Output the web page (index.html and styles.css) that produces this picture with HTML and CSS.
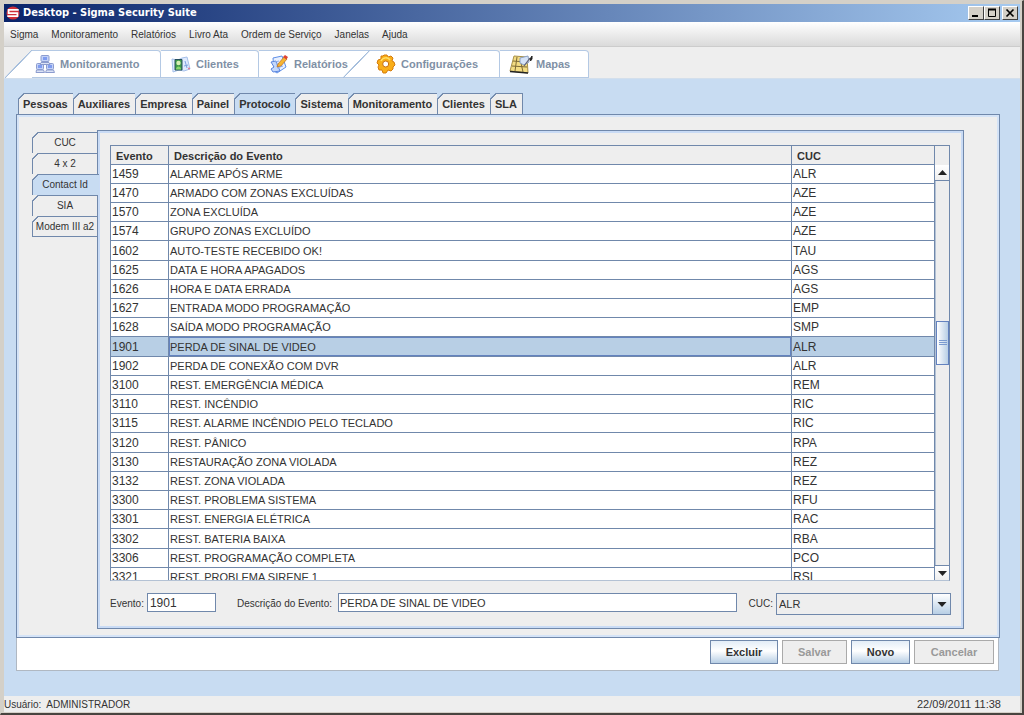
FILE: index.html
```html
<!DOCTYPE html>
<html lang="pt-BR">
<head>
<meta charset="utf-8">
<title>Desktop - Sigma Security Suite</title>
<link rel="stylesheet" href="styles.css">
</head>
<body>
<div class="window">
  <header class="titlebar">
    <svg class="logo" viewBox="0 0 16 16" aria-hidden="true"><circle cx="8" cy="8" r="7.500" fill="#d0303a"/><path d="M14.500 4.500H3v3.500h10v3.500H1.500" fill="none" stroke="#fff" stroke-width="2"/></svg>
    <h1 class="title">Desktop - Sigma Security Suite</h1>
    <div class="window-buttons">
      <button class="winbtn" aria-label="Minimizar"><svg viewBox="0 0 12 10"><path d="M2 8h6" stroke="#000" stroke-width="2"/></svg></button>
      <button class="winbtn" aria-label="Maximizar"><svg viewBox="0 0 12 10"><path d="M2.500 1v7.500h7V1" fill="none" stroke="#000"/><path d="M2 1.500h8" stroke="#000" stroke-width="2"/></svg></button>
      <button class="winbtn close" aria-label="Fechar"><svg viewBox="0 0 12 10"><path d="M2.500 1.500l7 7M9.500 1.500l-7 7" stroke="#000" stroke-width="1.700"/></svg></button>
    </div>
  </header>

  <nav class="menubar">
    <button>Sigma</button><button>Monitoramento</button><button>Relatórios</button><button>Livro Ata</button><button>Ordem de Serviço</button><button>Janelas</button><button>Ajuda</button>
  </nav>

  <nav class="modules">
    <button class="module slope first">
      <svg class="icon" viewBox="0 0 20 20" aria-hidden="true"><g stroke="#8c9cce" fill="#c3d2f7"><rect x="6" y="1.500" width="8" height="6" rx="1"/><rect x="1.500" y="9.500" width="7" height="6" rx="1"/><rect x="11.500" y="9.500" width="7" height="6" rx="1"/><path d="M6 8.500h8l1 2H5zM1.500 16h7l1 2.500H1zM11.500 16h7l1 2.500h-9z" fill="#dbe2f5"/></g><path d="M8 3h4v3H8zM3 11h4v3H3zM13 11h4v3h-4z" fill="#7f9cf0"/></svg>
      <span>Monitoramento</span></button>
    <button class="module clients">
      <svg class="icon" viewBox="0 0 20 20" aria-hidden="true"><path d="M1 5l6 1 4-2 5-1 3 12-6 2-5-1-6 2z" fill="#dfeafd" stroke="#a5c0ea"/><path d="M4 5.500h7V16H4z" fill="#3f9a48" stroke="#274f5c"/><circle cx="7.500" cy="9" r="2.200" fill="#d6efb2"/><path d="M5 15.500c0-4 5-4 5 0z" fill="#8ad86c"/><path d="M14 7l2 7M13 12l4-1" stroke="#7fa1df"/><circle cx="18" cy="14.500" r="1" fill="#e07890"/></svg>
      <span>Clientes</span></button>
    <button class="module reports">
      <svg class="icon" viewBox="0 0 20 20" aria-hidden="true"><path d="M4 4l9-2 4 11-9 6-3-2z" fill="#e8f0ff" stroke="#5f8fe6"/><path d="M2 8l5-1 4 10-7 1-2-3 3-2z" fill="#c4d8fb" stroke="#5b86df"/><path d="M6 8l4-1M7 11l6-2M8 14l6-2" stroke="#8cacec"/><path d="M9 10l6-7 3 2-6 7-4 1z" fill="#f7b531" stroke="#b76b22" stroke-width=".7"/><path d="M14 3l2-2 3 2-1.500 2.500z" fill="#dd4433"/></svg>
      <span>Relatórios</span></button>
    <button class="module slope config">
      <svg class="icon" viewBox="0 0 20 20" aria-hidden="true"><path d="M8 1l3 0 1 2 3-1 2 2-1 3 2 1 1 3-2 2v2l-2 2-3-1-2 3H7l-1-3-3 0-1-3 1-2-2-2 1-3 3-1 0-3 2 0z" fill="#f9ae18" stroke="#d57c0c"/><path d="M5 7c2-4 7-4 9-1" fill="none" stroke="#ffe168" stroke-width="1.500"/><circle cx="9.700" cy="10" r="3" fill="#fff" stroke="#c86e0c"/></svg>
      <span>Configurações</span></button>
    <button class="module maps">
      <svg class="icon map" viewBox="0 0 24 20" aria-hidden="true"><path d="M5 2l13 1 1 16L1 17z" fill="#f3dc82" stroke="#a89048"/><path d="M4 7l13 1M3 12l15 1M8 3L6 17M12 9l2 9" fill="none" stroke="#7d6a35"/><path d="M11 4l8-2 1 6-5 3-4-2z" fill="#d5e3f8" stroke="#8ba0c2"/><path d="M1 17.500l18 1.500" stroke="#222" stroke-width="1.300"/><path d="M15 12l6-8" stroke="#667" stroke-width="1.200"/><path d="M21 5l2-3v3l-1.500 2z" fill="#222" stroke="#222"/></svg>
      <span>Mapas</span></button>
  </nav>

  <main class="desk">
    <nav class="tabs">
      <button class="tab">Pessoas</button><button class="tab">Auxiliares</button><button class="tab">Empresa</button><button class="tab">Painel</button><button class="tab active">Protocolo</button><button class="tab">Sistema</button><button class="tab">Monitoramento</button><button class="tab">Clientes</button><button class="tab">SLA</button>
    </nav>
    <section class="pane">
      <nav class="side-tabs">
        <button class="side-tab">CUC</button><button class="side-tab">4 x 2</button><button class="side-tab active">Contact Id</button><button class="side-tab">SIA</button><button class="side-tab">Modem III a2</button>
      </nav>
      <section class="content">
        <div class="grid">
          <div class="grid-clip">
          <table class="events">
            <thead><tr><th class="col-event">Evento</th><th>Descrição do Evento</th><th class="col-cuc">CUC</th></tr></thead>
            <tbody>
              <tr><td>1459</td><td>ALARME APÓS ARME</td><td>ALR</td></tr>
              <tr><td>1470</td><td>ARMADO COM ZONAS EXCLUÍDAS</td><td>AZE</td></tr>
              <tr><td>1570</td><td>ZONA EXCLUÍDA</td><td>AZE</td></tr>
              <tr><td>1574</td><td>GRUPO ZONAS EXCLUÍDO</td><td>AZE</td></tr>
              <tr><td>1602</td><td>AUTO-TESTE RECEBIDO OK!</td><td>TAU</td></tr>
              <tr><td>1625</td><td>DATA E HORA APAGADOS</td><td>AGS</td></tr>
              <tr><td>1626</td><td>HORA E DATA ERRADA</td><td>AGS</td></tr>
              <tr><td>1627</td><td>ENTRADA MODO PROGRAMAÇÃO</td><td>EMP</td></tr>
              <tr><td>1628</td><td>SAÍDA MODO PROGRAMAÇÃO</td><td>SMP</td></tr>
              <tr class="selected"><td>1901</td><td class="focus">PERDA DE SINAL DE VIDEO</td><td>ALR</td></tr>
              <tr><td>1902</td><td>PERDA DE CONEXÃO COM DVR</td><td>ALR</td></tr>
              <tr><td>3100</td><td>REST. EMERGÊNCIA MÉDICA</td><td>REM</td></tr>
              <tr><td>3110</td><td>REST. INCÊNDIO</td><td>RIC</td></tr>
              <tr><td>3115</td><td>REST. ALARME INCÊNDIO PELO TECLADO</td><td>RIC</td></tr>
              <tr><td>3120</td><td>REST. PÂNICO</td><td>RPA</td></tr>
              <tr><td>3130</td><td>RESTAURAÇÃO ZONA VIOLADA</td><td>REZ</td></tr>
              <tr><td>3132</td><td>REST. ZONA VIOLADA</td><td>REZ</td></tr>
              <tr><td>3300</td><td>REST. PROBLEMA SISTEMA</td><td>RFU</td></tr>
              <tr><td>3301</td><td>REST. ENERGIA ELÉTRICA</td><td>RAC</td></tr>
              <tr><td>3302</td><td>REST. BATERIA BAIXA</td><td>RBA</td></tr>
              <tr><td>3306</td><td>REST. PROGRAMAÇÃO COMPLETA</td><td>PCO</td></tr>
              <tr><td>3321</td><td>REST. PROBLEMA SIRENE 1</td><td>RSI</td></tr>
            </tbody>
          </table>
          </div>
          <div class="scroll-col">
            <div class="scroll-head"></div>
            <button class="scroll-btn" aria-label="Rolar para cima"><svg viewBox="0 0 9 5"><path d="M0 5h9L4.500 0z" fill="#222"/></svg></button>
            <div class="track"><div class="space-above"></div><div class="thumb"></div><div class="space-below"></div></div>
            <button class="scroll-btn down" aria-label="Rolar para baixo"><svg viewBox="0 0 9 5"><path d="M0 0h9L4.500 5z" fill="#222"/></svg></button>
          </div>
        </div>
        <form class="form">
          <label for="evento">Evento:</label><input id="evento" class="short" value="1901">
          <label for="descricao" class="spaced">Descrição do Evento:</label><input id="descricao" class="long" value="PERDA DE SINAL DE VIDEO">
          <label for="cuc" class="spaced-sm">CUC:</label>
          <div class="combo"><select id="cuc"><option>ALR</option></select><span class="combo-arrow"><svg viewBox="0 0 9 5"><path d="M0 0h9L4.500 5z" fill="#222"/></svg></span></div>
        </form>
      </section>
    </section>
    <footer class="actions">
      <button class="action delete">Excluir</button><button class="action save" disabled>Salvar</button><button class="action new">Novo</button><button class="action cancel" disabled>Cancelar</button>
    </footer>
  </main>
  <footer class="status"><span class="user">Usuário:&nbsp; ADMINISTRADOR</span><time>22/09/2011 11:38</time></footer>
</div>
</body>
</html>
```
FILE: styles.css
```css
* { box-sizing: border-box; }
:root {
  --line: #7088ab;
  --blue: #c8dcf2;
  --gray: #eeeeee;
  --text: #333333;
}
body {
  margin: 0;
  font: 11px/14px "Liberation Sans", Arial, sans-serif;
  color: var(--text);
  white-space: nowrap;
}
button, input, select { font: inherit; color: inherit; margin: 0; border-radius: 0; }
button { padding: 0; border: 0; background: none; }
svg { display: block; }

.window {
  display: flex;
  flex-direction: column;
  height: 100vh;
  padding: 3px 2px 1px 3px;
  border: 1px solid #d4d0c8;
  border-right: 2px solid #484440;
  border-bottom: 2px solid #484440;
  background: #d4d0c8;
}

.titlebar {
  display: flex;
  align-items: center;
  height: 18px;
  padding: 0 2px;
  background: linear-gradient(90deg, #0a246a, #a6caf0);
}
.logo { width: 14px; height: 14px; }
.title {
  flex: 1;
  margin: 0 0 0 3px;
  font: bold 11px/14px "DejaVu Sans Condensed", "DejaVu Sans", sans-serif;
  color: #fff;
}
.window-buttons { display: flex; }
.winbtn {
  width: 16px;
  height: 14px;
  padding: 1px;
  background: #d4d0c8;
  border: 1px solid;
  border-color: #fff #404040 #404040 #fff;
}
.winbtn.close { margin-left: 2px; }
.winbtn svg { width: 12px; height: 10px; }

.menubar {
  display: flex;
  gap: 13px;
  height: 25px;
  padding: 1px 6px 0;
  background: linear-gradient(#fff, #dadada);
  border-bottom: 1px solid #ccc;
  font-size: 10px;
}

.modules {
  display: flex;
  height: 32px;
  padding-top: 3px;
  padding-left: 1px;
  background: var(--gray);
  border-bottom: 1px solid #d3dfec;
}
.module {
  display: flex;
  align-items: center;
  position: relative;
  height: 28px;
  border: 1px solid #b4c9e4;
  border-left: 0;
  border-radius: 0 4px 0 0;
  background: #fff;
  color: #7f90a5;
  font-weight: bold;
}
.module .icon { flex: none; width: 20px; height: 20px; margin-right: 5px; }
.module .map { width: 24px; }
.first { width: 156px; padding-left: 30px; }
.first::before, .config::before {
  content: "";
  position: absolute;
  left: 0;
  top: -1px;
  width: 27px;
  height: 28px;
  background: linear-gradient(to bottom right, var(--gray) 48%, #a5bedc 49% 51%, #fff 52%);
}
.clients { width: 98px; padding-left: 10px; }
.reports { width: 84px; padding-left: 10px; border-right: 0; border-radius: 0; z-index: 1; }
.config { width: 157px; padding-left: 33px; }
.config::before { z-index: 2; background: linear-gradient(to bottom right, transparent 48%, #a5bedc 49% 51%, transparent 52%); }
.maps { width: 89px; padding-left: 9px; }
.maps .icon { margin-right: 3px; }

.desk {
  flex: 1;
  min-height: 0;
  display: flex;
  flex-direction: column;
  padding: 14px 20px 25px 12px;
  background: var(--blue);
}
.tabs { display: flex; padding-left: 2px; }
.tab {
  position: relative;
  height: 21px;
  padding: 0 5px 0 4px;
  border: 1px solid var(--line);
  border-bottom: 0;
  border-left-width: 0;
  background: var(--gray);
  font-weight: bold;
}
.tab:first-child { border-left-width: 1px; }
.tab.active { background: var(--blue); }
.tab::before, .side-tab::before {
  content: "";
  position: absolute;
  left: -1px;
  top: -1px;
  width: 7px;
  height: 7px;
  background: linear-gradient(135deg, var(--blue) 42%, var(--line) 43% 53%, transparent 54%);
}
.pane {
  flex: 1;
  min-height: 0;
  display: flex;
  padding: 13px 35px 8px 15px;
  border: 1px solid var(--line);
  box-shadow: inset 0 0 0 2px #d4e3f7;
  background: var(--gray);
}
.side-tabs { width: 65px; padding-top: 4px; }
.side-tab {
  display: block;
  position: relative;
  width: 100%;
  height: 21px;
  border: 1px solid var(--line);
  border-width: 1px 0 0 1px;
  font-size: 10px;
}
.side-tab::before { background: linear-gradient(135deg, var(--gray) 42%, var(--line) 43% 53%, transparent 54%); }
.side-tab.active { background: var(--blue); z-index: 1; width: calc(100% + 2px); padding-right: 2px; }
.side-tab:last-child { border-bottom-width: 1px; }
.content {
  flex: 1;
  min-width: 0;
  display: flex;
  flex-direction: column;
  margin-top: 2px;
  padding: 14px 12px 13px;
  border: 1px solid var(--line);
  box-shadow: inset 0 0 0 2px #c9dbf5;
}
.grid {
  flex: 1;
  min-height: 0;
  display: flex;
  margin-right: 1px;
  border: 1px solid var(--line);
  border-bottom-color: #b4c2d4;
}
.grid-clip { flex: 1; min-width: 0; overflow: hidden; }
.events {
  width: 100%;
  table-layout: fixed;
  border-collapse: separate;
  border-spacing: 0;
  font-size: 12px;
}
.events th, .events td {
  height: 19px;
  padding: 0 1px;
  border: 0 solid var(--line);
  border-width: 0 1px 1px 0;
  text-align: left;
  background: #fff;
}
.events td:nth-child(2) { font-size: 11px; }
.events th { padding: 1px 5px 0; background: var(--gray); font-size: 11px; }
.events tr:nth-child(5n) td { height: 20px; }
.col-event { width: 58px; }
.col-cuc { width: 143px; }
.events .selected td { background: #b8cfe5; }
.events .selected .focus { box-shadow: inset 0 0 0 1px #6382bf; }

.scroll-col { width: 14px; display: flex; flex-direction: column; }
.scroll-head { height: 19px; }
.scroll-btn {
  display: flex;
  align-items: center;
  justify-content: center;
  height: 16px;
  border-bottom: 1px solid var(--line);
  background: linear-gradient(#fff, #eee);
}
.scroll-btn.down { height: 15px; border-bottom: 0; border-top: 1px solid var(--line); }
.scroll-btn svg { width: 9px; height: 5px; }
.track { flex: 1; display: flex; flex-direction: column; border-left: 1px solid #b4c2d4; }
.space-above { flex: 140; }
.space-below { flex: 201; }
.thumb {
  height: 44px;
  border: 1px solid #6382bf;
  background:
    repeating-linear-gradient(#7b9bd0 0 1px, transparent 1px 2px) center / 8px 5px no-repeat,
    linear-gradient(90deg, #fff, #b8cfe5);
}

.form { display: flex; align-items: flex-start; padding-top: 12px; font-size: 10px; }
.form label { line-height: 22px; }
.form input {
  height: 19px;
  padding: 1px 1px 0;
  border: 1px solid var(--line);
  background: #fff;
  font-size: 11px;
}
.form .short { width: 69px; margin-left: 3px; padding-left: 2px; font-size: 12px; }
.form .long { flex: 1; min-width: 0; margin-left: 6px; }
.spaced { margin-left: 21px; }
.spaced-sm { margin-left: 12px; }
.combo { position: relative; width: 175px; margin-left: 3px; }
.combo select {
  display: block;
  appearance: none;
  width: 100%;
  height: 22px;
  padding: 0 2px;
  border: 1px solid var(--line);
  background: var(--gray);
  font-size: 11px;
}
.combo-arrow {
  position: absolute;
  top: 1px;
  right: 1px;
  bottom: 1px;
  width: 18px;
  display: flex;
  align-items: center;
  justify-content: center;
  border-left: 1px solid var(--line);
  background: linear-gradient(#fff, #b8cfe5);
  pointer-events: none;
}
.combo-arrow svg { width: 10px; height: 5px; }

.actions {
  display: flex;
  justify-content: flex-end;
  gap: 4px;
  height: 33px;
  margin-right: 1px;
  padding: 2px 4px;
  border: 1px solid #b0b8c2;
  border-top: 0;
  background: #fff;
}
.action {
  height: 24px;
  border: 1px solid var(--line);
  background: linear-gradient(#e3edf7, #fff 45%, #b8cfe5);
  font-weight: bold;
}
.action:disabled { border-color: #aaa; background: var(--gray); color: #999; }
.delete { width: 68px; }
.save { width: 65px; }
.new { width: 59px; }
.cancel { width: 80px; }

.status {
  display: flex;
  justify-content: space-between;
  height: 16px;
  padding: 0 19px 0 0;
  background: var(--gray);
  line-height: 16px;
}
.user { font-size: 10px; line-height: 18px; }
```
